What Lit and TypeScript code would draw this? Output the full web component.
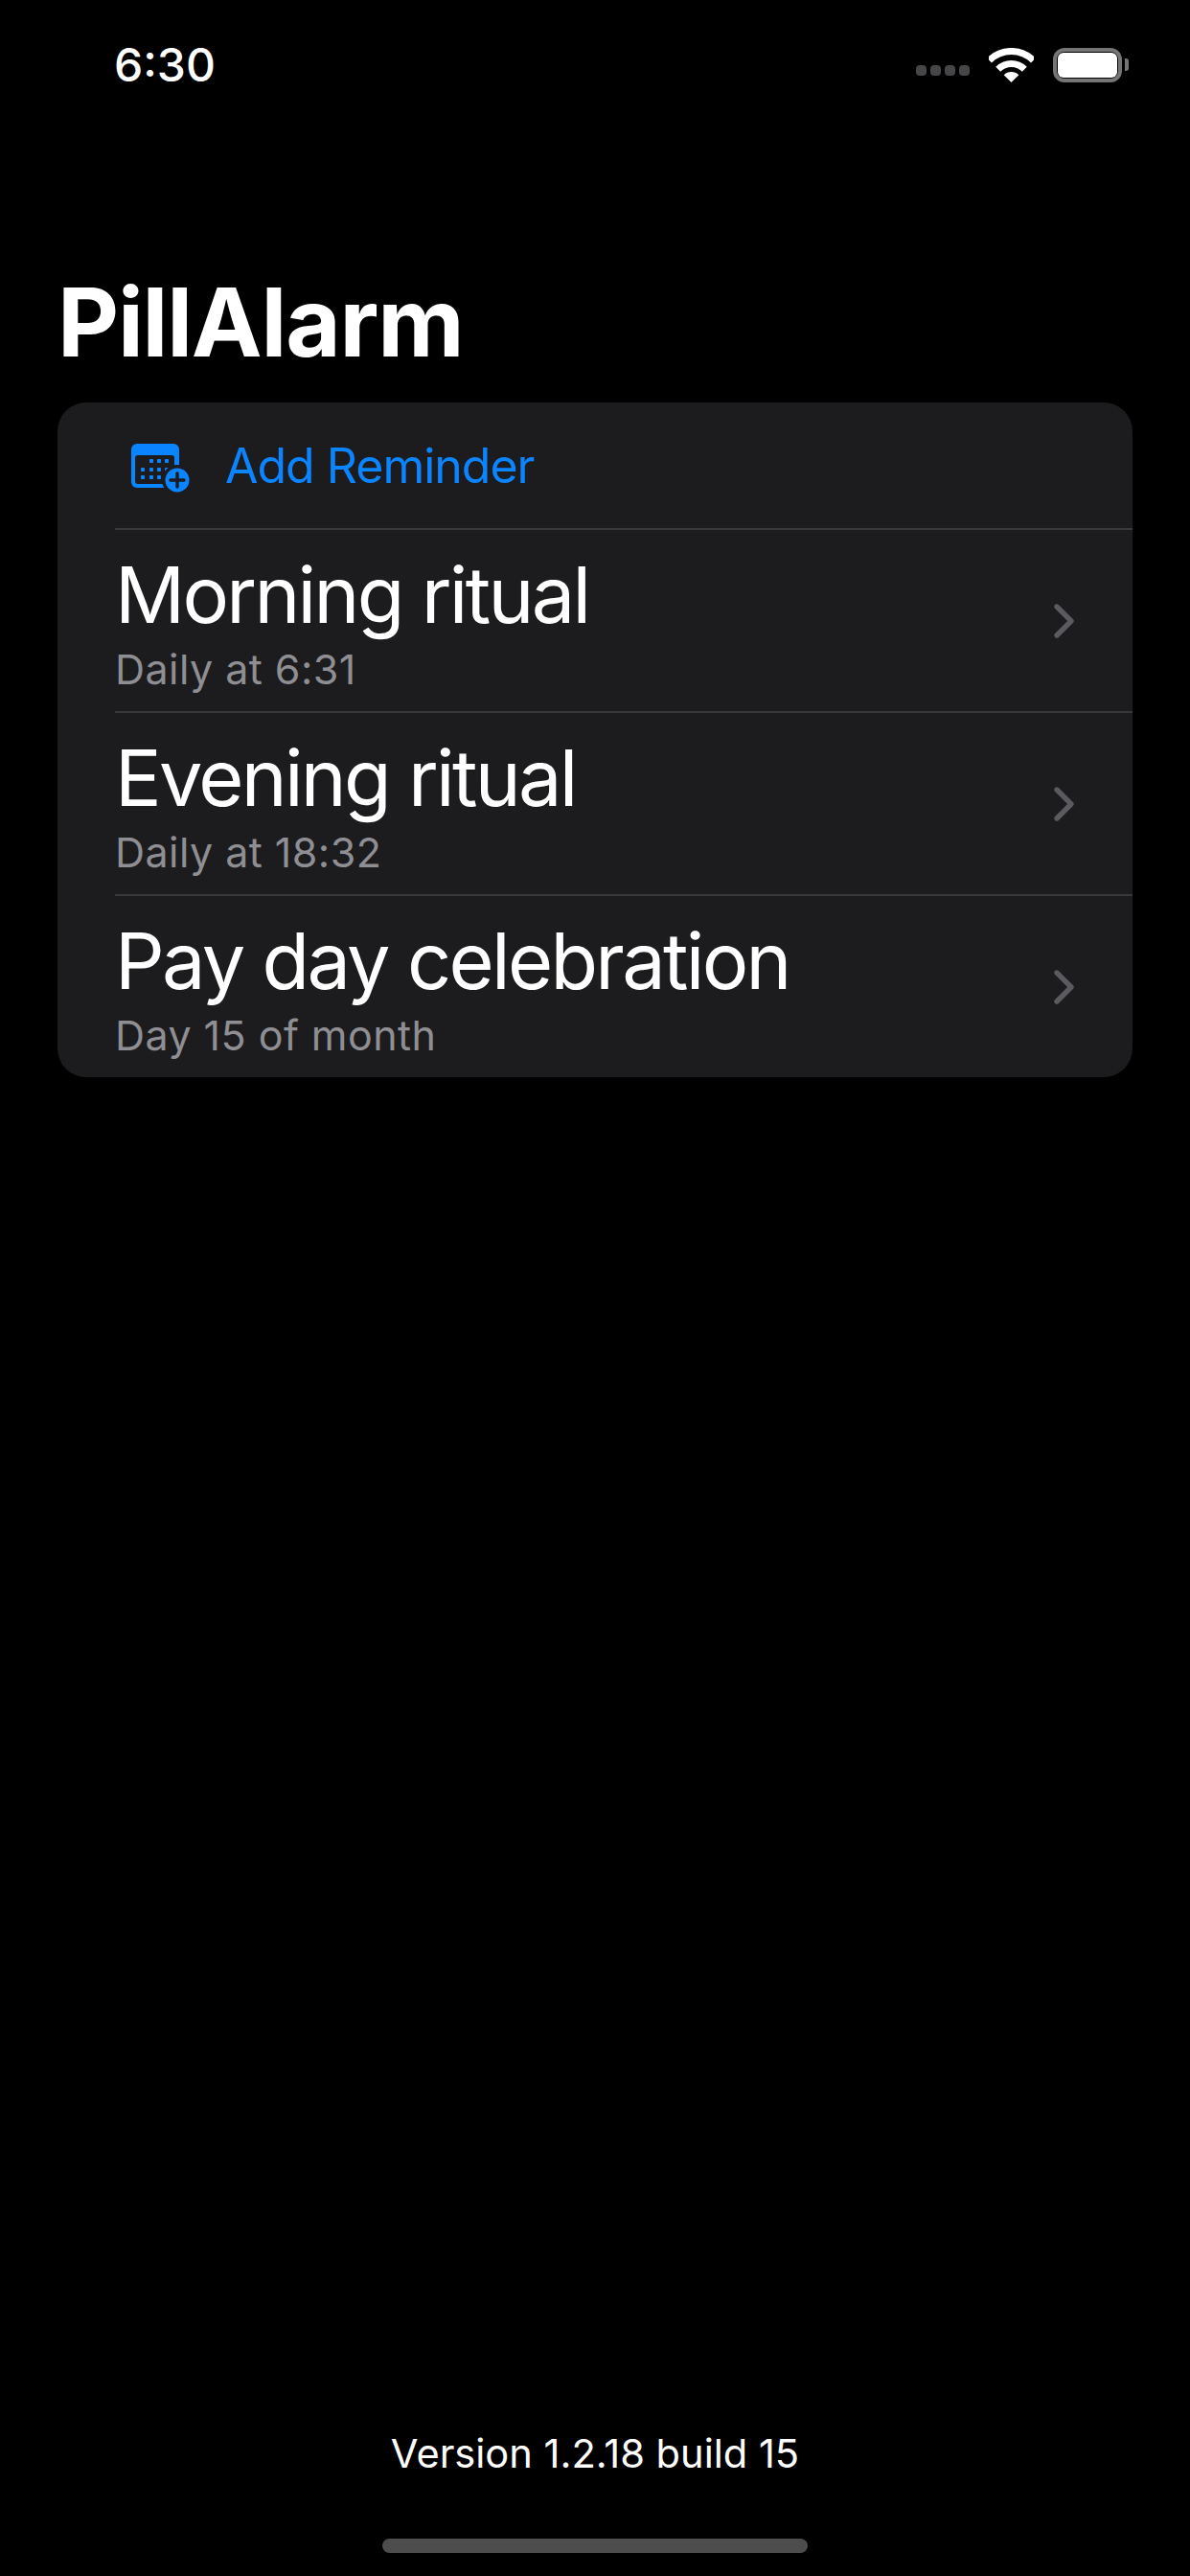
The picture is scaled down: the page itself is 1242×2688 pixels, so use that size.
import { LitElement, html, css, svg } from 'lit';
import { customElement } from 'lit/decorators.js';

const reminders = [
  { title: 'Morning ritual', detail: 'Daily at 6:31' },
  { title: 'Evening ritual', detail: 'Daily at 18:32' },
  { title: 'Pay day celebration', detail: 'Day 15 of month' },
];

const dots = [
  [19, 16], [27, 16], [35, 16],
  [10, 25], [19, 25], [27, 25], [35, 25],
  [10, 33], [19, 33], [27, 33],
];

const calendarIcon = html`<svg class="cal" width="62" height="54" viewBox="0 0 62 54">
  <rect x="0" y="0" width="50" height="46" rx="6" fill="#0a84ff"></rect>
  <rect x="4" y="12" width="41" height="30" rx="3" fill="#1c1c1e"></rect>
  ${dots.map(([x, y]) => svg`<rect x=${x} y=${y} width="4" height="4" rx="1" fill="#0a84ff"></rect>`)}
  <circle cx="48" cy="38" r="16" fill="#1c1c1e"></circle>
  <circle cx="48" cy="38" r="12.5" fill="#0a84ff"></circle>
  <path d="M48 31v14M41 38h14" stroke="#1c1c1e" stroke-width="3.4" stroke-linecap="round"></path>
</svg>`;

const chevron = html`<svg class="chevron" width="26" height="40" viewBox="0 0 26 40">
  <path d="M5 5l15 15L5 35" fill="none" stroke="#5b5b5f" stroke-width="5.4" stroke-linecap="round" stroke-linejoin="round"></path>
</svg>`;

const wifi = html`<svg width="47" height="36" viewBox="0 0 47 36">
  <path d="M.5 13A32.5 32.5 0 0 1 46.5 13" fill="none" stroke="#fff" stroke-width="7"></path>
  <path d="M9.7 22.2A19.5 19.5 0 0 1 37.3 22.2" fill="none" stroke="#fff" stroke-width="7"></path>
  <path d="M23.5 36L15.7 28.2A11 11 0 0 1 31.3 28.2Z" fill="#fff"></path>
</svg>`;

@customElement('app-root')
export class AppRoot extends LitElement {
  static styles = css`
    :host {
      display: block;
      background: #000;
      color: #fff;
      font-family: Inter, 'Liberation Sans', sans-serif;
    }
    .page {
      display: flex;
      flex-direction: column;
      height: 2688px;
      box-sizing: border-box;
      padding-bottom: 24px;
    }
    .status {
      display: flex;
      align-items: center;
      height: 49px;
      padding: 43px 64px 0 119px;
      box-sizing: content-box;
    }
    .time {
      font-size: 48px;
      font-weight: 500;
      line-height: 49px;
    }
    .status-right {
      margin-left: auto;
      display: flex;
      align-items: center;
      gap: 20px;
    }
    .signal {
      display: flex;
      gap: 4px;
      margin-top: 12px;
    }
    .signal i {
      width: 11px;
      height: 11px;
      border-radius: 4px;
      background: #464648;
    }
    .battery {
      display: flex;
      align-items: center;
      gap: 3px;
    }
    .battery-body {
      width: 72px;
      height: 36px;
      box-sizing: border-box;
      border: 4px solid #757575;
      border-radius: 12px;
      padding: 1px;
    }
    .battery-fill {
      height: 100%;
      background: #fff;
      border-radius: 6px;
    }
    .battery-nub {
      width: 4px;
      height: 13px;
      background: #757575;
      border-radius: 0 3px 3px 0;
    }
    h1 {
      margin: 186px 0 0;
      padding: 0 60px;
      font-size: 99px;
      font-weight: 700;
      letter-spacing: -1.2px;
      line-height: 116px;
    }
    .card {
      margin: 26px 60px 0;
      background: #1c1c1e;
      border-radius: 30px;
      overflow: hidden;
    }
    .add {
      display: flex;
      align-items: center;
      height: 131px;
      padding-left: 77px;
      box-sizing: border-box;
    }
    .cal {
      margin-top: 8px;
    }
    .add span {
      margin-left: 36px;
      font-size: 50px;
      letter-spacing: -1px;
      color: #0a84ff;
    }
    .row {
      display: flex;
      align-items: center;
      height: 191px;
      margin-left: 60px;
      box-sizing: border-box;
      border-top: 2px solid #38383a;
      padding-right: 58px;
    }
    .text {
      flex: 1;
    }
    .title {
      font-size: 81px;
      letter-spacing: -2.7px;
      line-height: 96px;
    }
    .detail {
      font-size: 43px;
      letter-spacing: 0.45px;
      line-height: 54px;
      margin-top: 2px;
      margin-bottom: -2px;
      color: #8e8e93;
    }
    .version {
      margin-top: auto;
      text-align: center;
      font-size: 41.6px;
      line-height: 52px;
    }
    .home {
      align-self: center;
      width: 444px;
      height: 15px;
      margin-top: 63px;
      border-radius: 8px;
      background: #4d4d4d;
    }
  `;

  render() {
    return html`
      <div class="page">
        <div class="status">
          <div class="time">6:30</div>
          <div class="status-right">
            <div class="signal"><i></i><i></i><i></i><i></i></div>
            ${wifi}
            <div class="battery">
              <div class="battery-body"><div class="battery-fill"></div></div>
              <div class="battery-nub"></div>
            </div>
          </div>
        </div>
        <h1>PillAlarm</h1>
        <div class="card">
          <div class="add">${calendarIcon}<span>Add Reminder</span></div>
          ${reminders.map(
            (r) => html`<div class="row">
              <div class="text">
                <div class="title">${r.title}</div>
                <div class="detail">${r.detail}</div>
              </div>
              ${chevron}
            </div>`
          )}
        </div>
        <div class="version">Version 1.2.18 build 15</div>
        <div class="home"></div>
      </div>
    `;
  }
}
